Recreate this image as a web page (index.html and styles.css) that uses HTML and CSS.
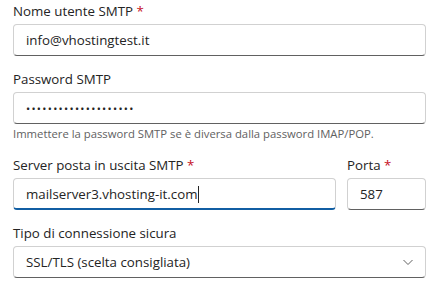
FILE: index.html
```html
<!DOCTYPE html>
<html lang="it">
<head>
<meta charset="utf-8">
<link rel="stylesheet" href="styles.css">
</head>
<body>
<form class="form">
  <div class="field">
    <div class="label">Nome utente SMTP <span class="req">*</span></div>
    <div class="input"><span class="value">info@vhostingtest.it</span></div>
  </div>
  <div class="field">
    <div class="label">Password SMTP</div>
    <div class="input"><span class="value dots">••••••••••••••••••••</span></div>
    <div class="hint">Immettere la password SMTP se è diversa dalla password IMAP/POP.</div>
  </div>
  <div class="row">
    <div class="field grow">
      <div class="label">Server posta in uscita SMTP <span class="req">*</span></div>
      <div class="input focused"><span class="value">mailserver3.vhosting-it.com</span><span class="caret"></span></div>
    </div>
    <div class="field port">
      <div class="label">Porta <span class="req">*</span></div>
      <div class="input"><span class="value">587</span></div>
    </div>
  </div>
  <div class="field">
    <div class="label">Tipo di connessione sicura</div>
    <div class="input select"><span class="value">SSL/TLS (scelta consigliata)</span>
      <svg class="chev" width="12" height="12" viewBox="0 0 12 12"><path d="M1.5 4 L6 8.5 L10.5 4" fill="none" stroke="#616161" stroke-width="1"/></svg>
    </div>
  </div>
</form>
</body>
</html>
```
FILE: styles.css
```css
* { box-sizing: border-box; }
body {
  margin: 0;
  background: #ffffff;
  font-family: "Open Sans", "Noto Sans", sans-serif;
  color: #242424;
}
.form {
  width: 426px;
  padding: 1px 0 0 13px;
  display: flex;
  flex-direction: column;
  gap: 13px;
}
.field { display: flex; flex-direction: column; }
.label {
  font-size: 13.3px;
  line-height: 20px;
  height: 20px;
  margin-bottom: 3px;
  color: #242424;
}
.req { color: #c50f1f; }
.input {
  height: 32px;
  border: 1px solid #d1d1d1;
  border-bottom-color: #616161;
  border-radius: 4px;
  padding: 0 12px;
  display: flex;
  align-items: center;
  font-size: 13.3px;
  color: #242424;
  background: #fff;
}
.value { white-space: nowrap; }
.dots { font-size: 11px; letter-spacing: 1.3px; }
.focused { border-bottom: 2px solid #115ea3; padding-top: 1px; }
.caret {
  display: inline-block;
  width: 1px;
  height: 17px;
  background: #242424;
  margin-left: 1px;
}
.hint {
  margin-top: 2px;
  font-size: 11.3px;
  line-height: 16px;
  color: #616161;
}
.row { display: flex; gap: 11px; }
.grow { flex: 1; }
.port { width: 79px; }
.select { justify-content: space-between; padding-right: 11px; }
.chev { display: block; }
```
